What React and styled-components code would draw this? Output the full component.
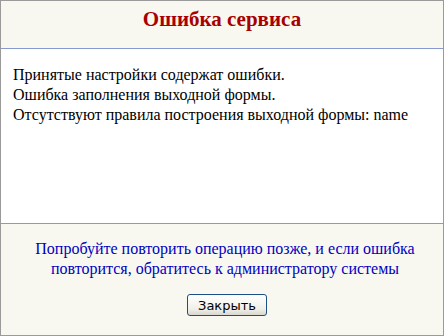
import styled, { createGlobalStyle } from "styled-components"

const Global = createGlobalStyle`
    html, body {
        margin: 0;
        padding: 0;
        background: #ffffff;
    }
`

const Dialog = styled.div`
    width: 444px;
    height: 336px;
    box-sizing: border-box;
    border: 1px solid #9a9a9a;
    display: flex;
    flex-direction: column;
    font-family: "Liberation Serif", "Times New Roman", serif;
`

const Header = styled.div`
    height: 48px;
    background-color: #f8f8f0;
    border-bottom: 1px solid #8898d0;
    display: flex;
    justify-content: center;
    padding-top: 4px;
    box-sizing: border-box;
`

const Title = styled.h1`
    margin: 0;
    font-size: 21px;
    font-weight: bold;
    color: #a80000;
    line-height: 28px;
`

const Content = styled.div`
    flex: 1;
    background-color: #ffffff;
    padding: 16px 12px;
    font-size: 16px;
    line-height: 20px;
    color: #000000;
`

const Footer = styled.div`
    height: 112px;
    box-sizing: border-box;
    background-color: #f8f8f0;
    border-top: 1px solid #8898d0;
    display: flex;
    flex-direction: column;
    align-items: center;
    padding: 15px 0 0 6px;
`

const Hint = styled.p`
    margin: 0;
    text-align: center;
    color: #0000c0;
    font-size: 16px;
    line-height: 20px;
    width: 400px;
`

const CloseButton = styled.button`
    margin: 15px 0 0 4px;
    width: 80px;
    height: 22px;
    box-sizing: border-box;
    border: 1px solid #1c4f84;
    border-radius: 3px;
    background: linear-gradient(#ffffff, #f0f0ea 70%, #d8d8d0);
    font-family: "DejaVu Sans", Tahoma, sans-serif;
    font-size: 13px;
    color: #000000;
    padding: 0;
`

export default function App(){
    return(
        <>
            <Global />
            <Dialog>
                <Header>
                    <Title>Ошибка сервиса</Title>
                </Header>
                <Content>
                    Принятые настройки содержат ошибки.<br/>
                    Ошибка заполнения выходной формы.<br/>
                    Отсутствуют правила построения выходной формы: name
                </Content>
                <Footer>
                    <Hint>Попробуйте повторить операцию позже, и если ошибка повторится, обратитесь к администратору системы</Hint>
                    <CloseButton>Закрыть</CloseButton>
                </Footer>
            </Dialog>
        </>
    )
}
